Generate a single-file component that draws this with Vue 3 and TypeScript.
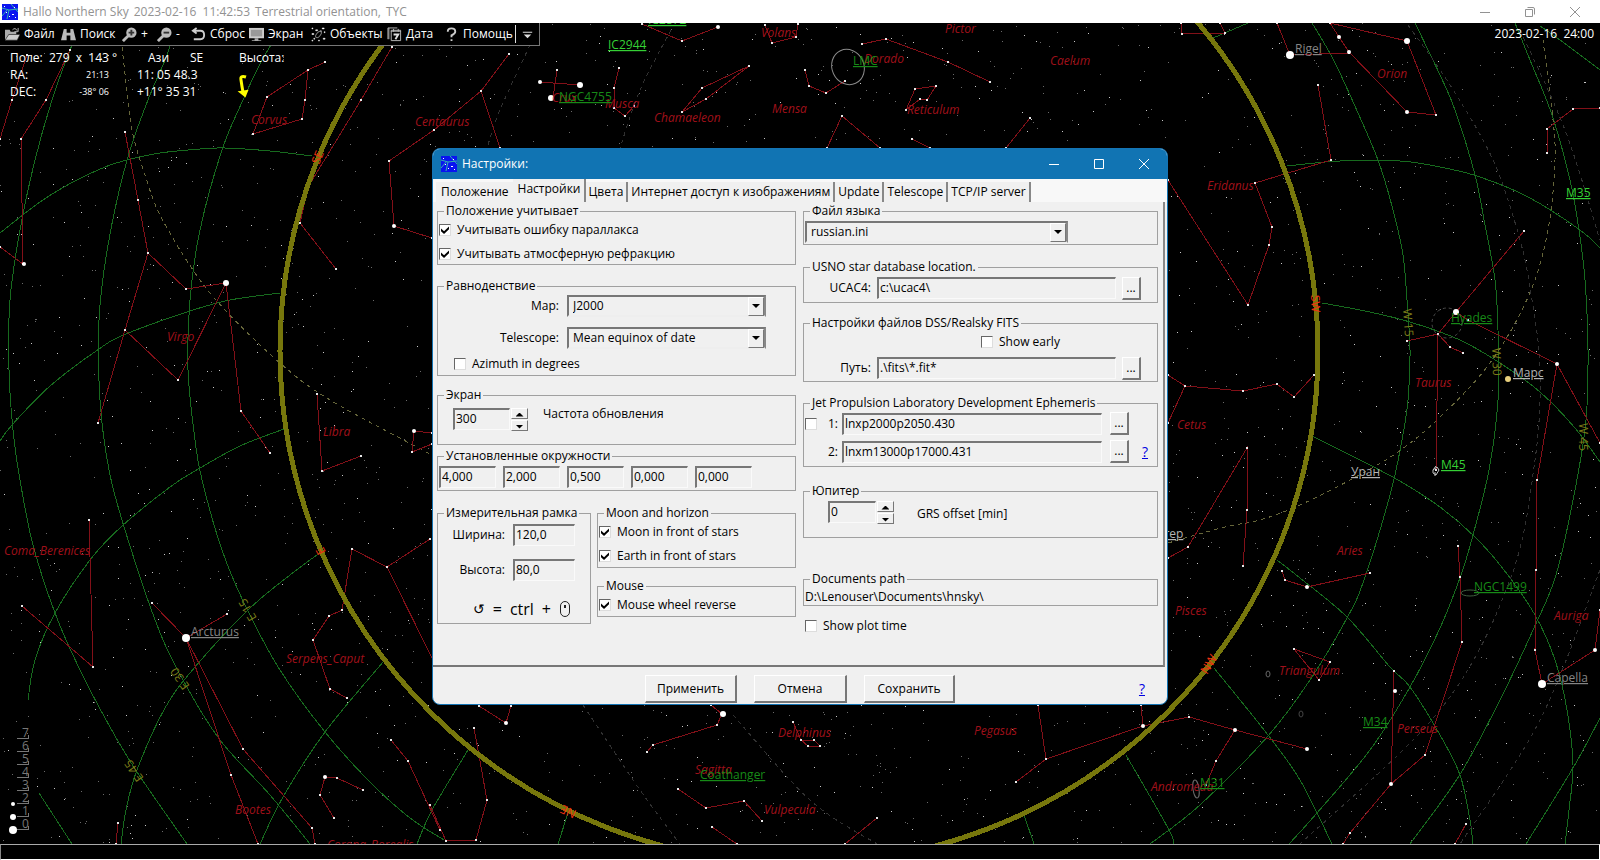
<script setup lang="ts">
import { ref } from 'vue'

type Point = [number, number]

interface Label {
  x: number
  y: number
  text: string
}

const parse = (source: string): Point[] =>
  source.split(' ').map((pair) => pair.split(',').map(Number) as Point)

/* Catmull-Rom spline through the given points */
function smooth(source: string): string {
  const p = parse(source)
  let d = `M${p[0][0]} ${p[0][1]}`
  for (let i = 0; i < p.length - 1; i++) {
    const a = p[Math.max(i - 1, 0)]
    const b = p[i]
    const c = p[i + 1]
    const e = p[Math.min(i + 2, p.length - 1)]
    d += `C${b[0] + (c[0] - a[0]) / 6} ${b[1] + (c[1] - a[1]) / 6} ${c[0] - (e[0] - b[0]) / 6} ${c[1] - (e[1] - b[1]) / 6} ${c[0]} ${c[1]}`
  }
  return d
}

const gridLines = [
  '0,233 40,202 73,182 105,167 127,160 160,153 200,149 225,148 270,151 312,156',
  '0,441 12,425 50,386 99,349 126,334 190,311 230,300 280,293',
  '284,429 240,446 200,468 170,487 122,526 90,560 55,613 35,660 28,700',
  '321,552 290,575 248,610 195,667 165,708 137,770 126,810 121,844',
  '383,662 325,732 283,797 260,844',
  '82,23 70,50 52,100 35,160 20,230 10,300 9,370 13,430 20,480 33,545 55,613 80,670 110,727 137,772 187,844',
  '178,23 165,60 148,100 127,160 108,245 99,320 100,400 109,470 125,530 157,625 183,680 220,740 270,795 310,844',
  '285,23 262,60 243,100 222,150 200,230 190,300 188,370 195,440 202,480 222,550 245,605 280,670 325,732 370,782 410,818 444,840',
  '39,793 72,844',
  '468,750 432,810 417,844',
  '568,813 558,844',
  '1024,815 1034,844',
  '1126,755 1168,828 1174,844',
  '1213,38 1248,23',
  '1312,23 1332,57 1350,95 1378,160 1393,210 1403,255 1407,300 1410,350 1408,400 1402,440 1390,495 1364,580 1347,618 1310,680 1268,736 1200,805 1150,844',
  '1415,23 1440,75 1455,110 1475,175 1485,225 1495,280 1498,330 1498,400 1489,470 1473,535 1461,575 1440,628 1410,687 1370,750 1317,813 1289,844',
  '1515,23 1530,60 1552,115 1570,180 1579,230 1585,280 1588,350 1586,420 1575,490 1556,575 1533,630 1500,700 1459,776 1410,844',
  '1540,26 1560,40 1600,70',
  '1600,718 1573,768 1526,844',
  '1287,166 1340,161 1400,161 1440,167 1480,177 1530,198 1580,230 1600,248',
  '1322,303 1365,311 1410,322 1460,340 1500,363 1540,392 1575,428 1600,462',
  '1312,436 1350,455 1398,480 1440,507 1475,537 1504,570 1535,615 1555,660 1567,710 1573,765 1569,810 1565,844',
  '1277,560 1300,578 1347,617 1390,667 1410,687 1440,735 1460,775 1470,820 1473,844',
  '1214,668 1268,735 1300,780 1332,844',
].map(smooth)

const ecliptic = [
  '122,47 128,100 133,135 145,175 160,215 193,270 225,310 280,363 330,400 432,455',
  '1168,543 1225,527 1260,520 1300,505 1350,480 1398,452 1440,417 1490,363 1529,295 1548,230 1555,160 1552,110 1543,40',
].map(smooth)

const boundaries = [
  '1408,25 1450,85 1493,160 1520,240 1532,300 1540,370 1535,460 1510,580 1440,710 1300,844',
  '1520,30 1565,130 1600,240',
  '1600,570 1540,720 1460,844',
  '530,45 500,110 487,148',
  '671,30 640,90 620,148',
  '583,705 640,790 680,844',
  '733,715 810,800 877,844',
].map(smooth)

const figures = [
  '27,55 12,100 0,139',
  '70,50 46,100 21,139 23,264 0,247',
  '125,132 138,200 148,253 186,289 226,283 241,411 270,453',
  '226,283 178,380 125,330',
  '148,253 125,330 98,423',
  '253,134 267,97 308,70 325,62',
  '308,70 305,100 302,119 253,134',
  '392,47 361,100 308,187 300,223 336,269',
  '509,54 481,91 434,130 389,161 394,226 432,238',
  '481,91 500,148',
  '317,394 322,471 361,456',
  '432,433 414,431 412,452 432,444',
  '89,520 93,667 22,606',
  '152,603 186,638 227,614',
  '186,638 243,749 312,828 315,844',
  '186,638 231,775 258,844',
  '430,539 387,567 352,549 342,610 329,616 313,640 330,689 347,698',
  '387,567 434,662',
  '391,740 408,761 440,830',
  '363,790 337,778 325,777 320,795 334,818',
  '118,823 116,844',
  '642,24 682,41 718,27',
  '557,70 553,98',
  '540,82 580,85',
  '619,68 614,88 614,108 625,116 634,106',
  '749,66 702,88 682,112 706,99 749,66',
  '765,25 772,43 796,37 798,24',
  '862,44 886,39 948,62 990,82',
  '805,70 809,86 826,93 845,81',
  '915,89 936,86 927,100 920,99 906,110 915,89',
  '827,148 842,116 880,148',
  '1006,148 1030,118',
  '912,139 930,148',
  '1181,23 1182,34 1225,33 1220,23',
  '1277,23 1290,55 1349,53',
  '1330,23 1407,41 1436,115 1407,112 1349,52 1339,37 1330,23',
  '1318,85 1331,160 1255,183 1272,227 1269,245 1248,305 1168,180',
  '1547,153 1547,129 1573,109 1600,108',
  '1524,231 1456,312 1438,334 1407,341',
  '1438,334 1450,347 1463,353',
  '1438,334 1436,470',
  '1456,312 1468,320 1557,364 1600,443',
  '1557,364 1537,480 1536,570 1535,650 1542,684 1595,650 1600,610',
  '1168,375 1185,386 1243,391 1277,384 1294,397 1314,375',
  '1185,386 1168,423',
  '1168,558 1188,547 1247,448 1247,510 1243,566',
  '1282,571 1285,580 1307,587 1370,573',
  '1458,546 1460,577 1462,642 1425,755 1391,784 1350,833 1343,844',
  '1391,784 1394,671',
  '1294,649 1330,662 1319,680 1294,649',
  '1143,726 1189,717 1235,730 1307,749',
  '1235,730 1216,761 1206,785',
  '1466,824 1455,844',
  '465,706 483,723 487,706',
  '474,728 487,800 476,840 446,841 430,805',
  '711,705 722,714 717,725 653,745 647,752',
  '793,722 801,740 814,740 820,746 808,746 801,740',
  '678,789 706,808 744,801 762,821',
  '712,827 737,844',
  '845,844 877,818',
  '1038,705 1046,759 1143,726 1141,705',
  '1046,759 1016,782',
].map((f) => (f.startsWith('465,706') ? '479,706 506,723 511,706' : f))

const brightStars = [
  [186, 638, 4], [1290, 55, 4], [1542, 684, 4], [226, 283, 3], [1407, 41, 3], [1456, 312, 3],
  [24, 264, 2], [394, 226, 2], [414, 431, 2], [325, 777, 2], [540, 82, 2], [580, 85, 3],
  [551, 98, 3], [718, 27, 2], [1339, 37, 2], [1349, 52, 2], [1407, 112, 2], [1557, 364, 2],
  [1307, 587, 2], [1235, 730, 2], [1307, 749, 2], [1395, 691, 2], [1391, 784, 2], [1595, 650, 2],
  [723, 714, 3], [506, 723, 2], [1143, 726, 2], [13, 830, 4], [13, 817, 3], [13, 804, 2],
]

/* Faint background stars: a seeded generator keeps the field stable */
function starField(count: number, seed: number): string {
  let state = seed
  const next = () => {
    state = (state * 1664525 + 1013904223) % 4294967296
    return state / 4294967296
  }
  let d = ''
  for (let i = 0; i < count; i++) d += `M${Math.floor(next() * 1600)} ${23 + Math.floor(next() * 820)}h1v1h-1z`
  return d
}
const dimStars = starField(2200, 77)
const faintStars = starField(750, 1203)
const vertexStars = figures
  .flatMap(parse)
  .map(([x, y]) => `M${x - 1} ${y - 1}h2v2h-2z`)
  .join('')

const constellations: Label[] = [
  { x: 251, y: 124, text: 'Corvus' },
  { x: 415, y: 126, text: 'Centaurus' },
  { x: 167, y: 341, text: 'Virgo' },
  { x: 323, y: 436, text: 'Libra' },
  { x: 4, y: 555, text: 'Coma_Berenices' },
  { x: 286, y: 663, text: 'Serpens_Caput' },
  { x: 235, y: 814, text: 'Bootes' },
  { x: 327, y: 849, text: 'Corona_Borealis' },
  { x: 552, y: 102, text: 'Crux' },
  { x: 605, y: 108, text: 'Musca' },
  { x: 654, y: 122, text: 'Chamaeleon' },
  { x: 761, y: 37, text: 'Volans' },
  { x: 772, y: 113, text: 'Mensa' },
  { x: 864, y: 63, text: 'Dorado' },
  { x: 907, y: 114, text: 'Reticulum' },
  { x: 945, y: 33, text: 'Pictor' },
  { x: 1050, y: 65, text: 'Caelum' },
  { x: 1377, y: 78, text: 'Orion' },
  { x: 1207, y: 190, text: 'Eridanus' },
  { x: 1415, y: 387, text: 'Taurus' },
  { x: 1177, y: 429, text: 'Cetus' },
  { x: 1337, y: 555, text: 'Aries' },
  { x: 1175, y: 615, text: 'Pisces' },
  { x: 1279, y: 675, text: 'Triangulum' },
  { x: 1554, y: 620, text: 'Auriga' },
  { x: 1397, y: 733, text: 'Perseus' },
  { x: 1151, y: 791, text: 'Andromeda' },
  { x: 778, y: 737, text: 'Delphinus' },
  { x: 974, y: 735, text: 'Pegasus' },
  { x: 695, y: 774, text: 'Sagitta' },
  { x: 764, y: 814, text: 'Vulpecula' },
]

const deepSky: (Label & { bright?: boolean })[] = [
  { x: 648, y: 24, text: 'IC2872', bright: true },
  { x: 608, y: 49, text: 'IC2944', bright: true },
  { x: 559, y: 101, text: 'NGC4755' },
  { x: 853, y: 65, text: 'LMC' },
  { x: 1566, y: 197, text: 'M35', bright: true },
  { x: 1451, y: 322, text: 'Hyades' },
  { x: 1441, y: 469, text: 'M45', bright: true },
  { x: 1474, y: 591, text: 'NGC1499' },
  { x: 1363, y: 726, text: 'M34' },
  { x: 1200, y: 787, text: 'M31' },
  { x: 700, y: 779, text: 'Coathanger' },
]

const starNames: Label[] = [
  { x: 191, y: 636, text: 'Arcturus' },
  { x: 1295, y: 53, text: 'Rigel' },
  { x: 1547, y: 682, text: 'Capella' },
]

const planets: Label[] = [
  { x: 1513, y: 377, text: 'Марс' },
  { x: 1351, y: 476, text: 'Уран' },
  { x: 1136, y: 538, text: 'Юпитер' },
]

const degreeMarks = [
  { x: 257, y: 618, angle: -120, text: 'E 15' },
  { x: 190, y: 686, angle: -125, text: 'E 30' },
  { x: 144, y: 778, angle: -125, text: 'E 45' },
  { x: 1403, y: 309, angle: 86, text: 'W 15' },
  { x: 1492, y: 348, angle: 88, text: 'W 30' },
  { x: 1579, y: 423, angle: 90, text: 'W 45' },
]

const horizonMarks = [
  { x: 319, y: 165, angle: -68, text: 'SE' },
  { x: 326, y: 552, angle: -118, text: 'E' },
  { x: 577, y: 811, angle: 205, text: 'NE' },
  { x: 1311, y: 295, angle: 88, text: 'SW' },
  { x: 1207, y: 675, angle: -58, text: 'NW' },
]

const magnitudes = [7, 6, 5, 4, 3, 2, 1, 0]

const tools = [
  { icon: 'open', text: 'Файл' },
  { icon: 'find', text: 'Поиск' },
  { icon: 'zoomin', text: '+' },
  { icon: 'zoomout', text: '-' },
  { icon: 'undo', text: 'Сброс' },
  { icon: 'screen', text: 'Экран' },
  { icon: 'objects', text: 'Объекты' },
  { icon: 'date', text: 'Дата' },
  { icon: 'help', text: 'Помощь' },
]

const tabs = ['Положение', 'Настройки', 'Цвета', 'Интернет доступ к изображениям', 'Update', 'Telescope', 'TCP/IP server']
const activeTab = ref(1)

const parallax = ref(true)
const refraction = ref(true)
const azimuth = ref(false)
const moonFront = ref(true)
const earthFront = ref(true)
const wheelReverse = ref(true)
const showEarly = ref(false)
const useEphemeris = ref(false)
const plotTime = ref(false)
const refresh = ref(300)
const grs = ref(0)
const circles = ref(['4,000', '2,000', '0,500', '0,000', '0,000'])
const frameWidth = ref('120,0')
const frameHeight = ref('80,0')
const ucacPath = ref('c:\\ucac4\\')
const fitsPath = ref('.\\fits\\*.fit*')
const ephemeris1 = ref('lnxp2000p2050.430')
const ephemeris2 = ref('lnxm13000p17000.431')
</script>

<template>
  <div class="desktop">
    <header class="titlebar">
      <svg class="logo" viewBox="0 0 16 16" aria-hidden="true">
        <rect width="16" height="16" fill="#0a14f0" />
        <path d="M0 4L7 6L16 5M7 6L5 15M9 0L16 8M0 12L6 5" fill="none" stroke="#35b0b0" />
        <path d="M2 2h1v1h-1zM12 3h1v1h-1zM4 8h1v1h-1zM10 10h2v1h-2zM13 13h1v1h-1zM7 12h1v1h-1z" fill="#fff" />
      </svg>
      <h1>
        <span>Hallo Northern Sky</span><span>2023-02-16&nbsp; 11:42:53</span><span>Terrestrial orientation,</span><span>TYC</span>
      </h1>
      <div class="wincontrols">
        <button type="button" aria-label="Minimize"><svg viewBox="0 0 12 12"><path d="M1 6.500H11" /></svg></button>
        <button type="button" aria-label="Restore"><svg viewBox="0 0 12 12"><path d="M3.500 1.500H9Q10.500 1.500 10.500 3V8.500M1.500 3.500H8.500V10.500H1.500Z" /></svg></button>
        <button type="button" aria-label="Close"><svg viewBox="0 0 12 12"><path d="M1 1L11 11M11 1L1 11" /></svg></button>
      </div>
    </header>

    <main class="viewport">
      <svg class="sky" viewBox="0 23 1600 821" preserveAspectRatio="xMidYMin slice">
        <g shape-rendering="crispEdges" fill="none">
          <path :d="dimStars" fill="#6a6a6a" />
          <path :d="faintStars" fill="#c8c8c8" />
          <path v-for="(d, i) in gridLines" :key="'g' + i" :d="d" stroke="#176a1e" />
          <path v-for="(d, i) in ecliptic" :key="'e' + i" :d="d" stroke="#66663a" stroke-dasharray="4 4" />
          <path v-for="(d, i) in boundaries" :key="'b' + i" :d="d" stroke="#303030" stroke-dasharray="4 4" />
          <polyline v-for="(f, i) in figures" :key="'f' + i" :points="f" stroke="#821018" />
          <path :d="vertexStars" fill="#e8e8e8" />
          <ellipse cx="799" cy="351" rx="519" ry="513" stroke="#77770c" stroke-width="5" />
        </g>
        <g fill="none" stroke="#8a8a8a">
          <ellipse cx="848" cy="67" rx="16" ry="18" transform="rotate(-25 848 67)" />
          <ellipse cx="1470" cy="593" rx="9" ry="3" stroke="#3f5f3f" />
          <ellipse cx="1196" cy="789" rx="3" ry="9" transform="rotate(-8 1196 789)" stroke="#666" />
          <ellipse cx="1268" cy="674" rx="2" ry="3" stroke="#666" />
          <ellipse cx="1301" cy="714" rx="2" ry="3" stroke="#444" />
          <circle cx="1447" cy="323" r="15" stroke="#4c4c4c" stroke-dasharray="3 3" />
          <path d="M1433 470l4-3 2 3-3 5-3-2zl3-4M1435 476v-4" stroke="#c8c8c8" />
        </g>
        <circle v-for="(s, i) in brightStars" :key="'s' + i" :cx="s[0]" :cy="s[1]" :r="s[2]" fill="#fff" />
        <circle cx="1508" cy="379" r="3" fill="#e8cf7c" />
        <g class="name constellation">
          <text v-for="l in constellations" :key="l.text" :x="l.x" :y="l.y">{{ l.text }}</text>
        </g>
        <g class="name linked">
          <text v-for="l in deepSky" :key="l.text" :x="l.x" :y="l.y" :class="{ bright: l.bright }">{{ l.text }}</text>
          <text v-for="l in starNames" :key="l.text" :x="l.x" :y="l.y" class="star">{{ l.text }}</text>
          <text v-for="l in planets" :key="l.text" :x="l.x" :y="l.y" class="planet">{{ l.text }}</text>
        </g>
        <g class="name degree">
          <text v-for="m in degreeMarks" :key="m.text" :transform="`translate(${m.x} ${m.y}) rotate(${m.angle})`">{{ m.text }}</text>
        </g>
        <g class="name horizon">
          <text v-for="m in horizonMarks" :key="m.text" :transform="`translate(${m.x} ${m.y}) rotate(${m.angle})`">{{ m.text }}</text>
        </g>
        <g class="name scale">
          <g v-for="(m, i) in magnitudes" :key="m">
            <text x="22" :y="737 + i * 13">{{ m }}</text>
            <path :d="`M17 ${738.5 + i * 13}H29M28.500 ${735 + i * 13}V${738 + i * 13}`" stroke="#777" />
          </g>
        </g>
        <path d="M246 77Q240 75 241 80Q242 87 243 92" fill="none" stroke="#ff0" stroke-width="3" />
        <path d="M240 92l7-1-2 5z" fill="#ff0" stroke="#ff0" stroke-width="2" />
      </svg>

      <nav class="toolbar" aria-label="Menu">
        <button v-for="t in tools" :key="t.icon" type="button">
          <svg viewBox="0 0 16 16" aria-hidden="true">
            <template v-if="t.icon === 'open'">
              <path d="M0 14V3h5l1 2h6v3H4z" fill="#aaa" />
              <path d="M4 8h12l-3 6H0z" fill="#ccc" stroke="#222" stroke-width=".6" />
              <path d="M8 3q3-3 5 1M14 1v4h-4" fill="none" stroke="#bbb" />
            </template>
            <path v-else-if="t.icon === 'find'" d="M3 2h3v4h4V2h3l3 12h-6V9H6v5H0z" fill="#bbb" />
            <template v-else-if="t.icon === 'zoomin' || t.icon === 'zoomout'">
              <path d="M1 15L7 9" stroke="#bbb" stroke-width="3" />
              <circle cx="10" cy="6" r="5.500" fill="#bbb" />
              <path :d="t.icon === 'zoomin' ? 'M10 3V9M7 6H13' : 'M7 6H13'" stroke="#333" stroke-width="2" />
            </template>
            <path v-else-if="t.icon === 'undo'" d="M6 1L2 4L6 7M2 4H10Q14 4 14 8.500T10 13H3" fill="none" stroke="#ccc" stroke-width="2" />
            <template v-else-if="t.icon === 'screen'">
              <rect y="1" width="16" height="11" fill="#ccc" />
              <rect x="2" y="3" width="12" height="7" fill="#999" />
              <path d="M6 12h4v2h3v1H3v-1h3z" fill="#aaa" />
            </template>
            <template v-else-if="t.icon === 'objects'">
              <path d="M1 1h1v1h-1zM5 3h2v1h-2zM12 1h2v1h-2zM14 5h1v1h-1zM1 7h2v1h-2zM3 12h1v1h-1zM8 14h1v1h-1zM13 12h2v1h-2zM10 4h1v1h-1zM1 14h1v1h-1z" fill="#fff" stroke="#fff" stroke-width=".5" />
              <ellipse cx="8" cy="8" rx="2" ry="4" transform="rotate(40 8 8)" fill="none" stroke="#888" />
            </template>
            <template v-else-if="t.icon === 'date'">
              <path d="M1 13V1h10M2 1v12M4.500 3.500h10v11h-10zM4 4.500h11M7 2v3M12 2v3" fill="none" stroke="#bbb" />
              <path d="M7 8h5L9 13" fill="none" stroke="#ddd" stroke-width="2" />
            </template>
            <path v-else d="M4 5Q4 1.500 8 1.500T12 5Q12 7 8 9V11M8 13v2" fill="none" stroke="#ccc" stroke-width="2" />
          </svg>
          <span>{{ t.text }}</span>
        </button>
        <button type="button" class="more" aria-label="More">
          <svg viewBox="0 0 16 16"><path d="M3 5h10v1H3zM4 8h8l-4 4z" fill="#ddd" /></svg>
        </button>
      </nav>

      <p class="clock">2023-02-16&nbsp; 24:00</p>

      <section class="readout" aria-label="Position">
        <span>Поле:</span><span>279&nbsp; x&nbsp; 143 °</span><span class="azi">Ази</span><span>SE</span><span>Высота:</span>
        <span>RA:</span><small>21:13</small><span class="wide">11: 05 48.3</span><span></span>
        <span>DEC:</span><small>-38° 06</small><span class="wide">+11° 35 31</span>
      </section>

      <section class="dialog" role="dialog" aria-labelledby="dlg-title">
        <header class="caption">
          <svg class="logo" viewBox="0 0 16 16" aria-hidden="true">
            <rect width="16" height="16" fill="#0a14f0" />
            <path d="M0 4L7 6L16 5M7 6L5 15M9 0L16 8M0 12L6 5" fill="none" stroke="#35b0b0" />
            <path d="M2 2h1v1h-1zM12 3h1v1h-1zM4 8h1v1h-1zM10 10h2v1h-2zM13 13h1v1h-1zM7 12h1v1h-1z" fill="#fff" />
          </svg>
          <h2 id="dlg-title">Настройки:</h2>
          <div class="wincontrols">
            <button type="button" aria-label="Minimize"><svg viewBox="0 0 12 12"><path d="M1 6.500H11" /></svg></button>
            <button type="button" aria-label="Maximize"><svg viewBox="0 0 12 12"><path d="M1.500 1.500H10.500V10.500H1.500Z" /></svg></button>
            <button type="button" aria-label="Close"><svg viewBox="0 0 12 12"><path d="M1 1L11 11M11 1L1 11" /></svg></button>
          </div>
        </header>

        <div class="tabs" role="tablist">
          <button
            v-for="(t, i) in tabs"
            :key="t"
            type="button"
            role="tab"
            :aria-selected="i === activeTab"
            :class="{ active: i === activeTab }"
            @click="activeTab = i"
          >{{ t }}</button>
        </div>

        <div class="page">
          <div class="column">
            <fieldset class="g-position">
              <legend>Положение учитывает</legend>
              <label class="check"><input v-model="parallax" type="checkbox" />Учитывать ошибку параллакса</label>
              <label class="check"><input v-model="refraction" type="checkbox" />Учитывать атмосферную рефракцию</label>
            </fieldset>

            <fieldset class="g-equinox">
              <legend>Равноденствие</legend>
              <div class="pairs">
                <label for="map">Map:</label>
                <div class="combo"><select id="map"><option>J2000</option></select><i class="arrow" aria-hidden="true"></i></div>
                <label for="scope">Telescope:</label>
                <div class="combo"><select id="scope"><option>Mean equinox of date</option></select><i class="arrow" aria-hidden="true"></i></div>
              </div>
              <label class="check"><input v-model="azimuth" type="checkbox" />Azimuth in degrees</label>
            </fieldset>

            <fieldset class="g-screen">
              <legend>Экран</legend>
              <div class="spinrow">
                <input id="refresh" v-model.number="refresh" type="text" />
                <div class="spin">
                  <button type="button" aria-label="Increase" @click="refresh++"></button>
                  <button type="button" aria-label="Decrease" class="down" @click="refresh--"></button>
                </div>
                <label for="refresh">Частота обновления</label>
              </div>
            </fieldset>

            <fieldset class="g-circles">
              <legend>Установленные окружности</legend>
              <div class="circles">
                <input v-for="(c, i) in circles" :key="i" v-model="circles[i]" type="text" :aria-label="`Окружность ${i + 1}`" />
              </div>
            </fieldset>

            <div class="split">
              <fieldset class="g-frame">
                <legend>Измерительная рамка</legend>
                <div class="size"><label for="fw">Ширина:</label><input id="fw" v-model="frameWidth" type="text" /></div>
                <div class="size"><label for="fh">Высота:</label><input id="fh" v-model="frameHeight" type="text" /></div>
                <p class="hint">
                  <span class="turn">↺</span><span>=</span><span>ctrl</span><span>+</span>
                  <svg viewBox="0 0 12 18" aria-hidden="true"><rect x="1.500" y="1.500" width="9" height="15" rx="4.500" fill="none" stroke="#222" /><path d="M6 5v3" stroke="#222" stroke-width="2" /></svg>
                </p>
              </fieldset>
              <div class="side">
                <fieldset class="g-moon">
                  <legend>Moon and horizon</legend>
                  <label class="check"><input v-model="moonFront" type="checkbox" />Moon in front of stars</label>
                  <label class="check"><input v-model="earthFront" type="checkbox" />Earth in front of stars</label>
                </fieldset>
                <fieldset class="g-mouse">
                  <legend>Mouse</legend>
                  <label class="check"><input v-model="wheelReverse" type="checkbox" />Mouse wheel reverse</label>
                </fieldset>
              </div>
            </div>
          </div>

          <div class="column">
            <fieldset class="g-lang">
              <legend>Файл языка</legend>
              <div class="combo"><select aria-label="Файл языка"><option>russian.ini</option></select><i class="arrow" aria-hidden="true"></i></div>
            </fieldset>

            <fieldset class="g-usno">
              <legend>USNO star database location.</legend>
              <div class="path"><label for="ucac">UCAC4:</label><input id="ucac" v-model="ucacPath" type="text" /><button type="button" class="raised">...</button></div>
            </fieldset>

            <fieldset class="g-fits">
              <legend>Настройки файлов DSS/Realsky FITS</legend>
              <label class="check"><input v-model="showEarly" type="checkbox" />Show early</label>
              <div class="path"><label for="fits">Путь:</label><input id="fits" v-model="fitsPath" type="text" /><button type="button" class="raised">...</button></div>
            </fieldset>

            <fieldset class="g-jpl">
              <legend>Jet Propulsion Laboratory Development Ephemeris</legend>
              <div class="eph"><input v-model="useEphemeris" type="checkbox" aria-label="Ephemeris" /><label for="e1">1:</label><input id="e1" v-model="ephemeris1" type="text" /><button type="button" class="raised">...</button></div>
              <div class="eph"><span></span><label for="e2">2:</label><input id="e2" v-model="ephemeris2" type="text" /><button type="button" class="raised">...</button><a href="#">?</a></div>
            </fieldset>

            <fieldset class="g-jupiter">
              <legend>Юпитер</legend>
              <div class="spinrow">
                <input id="grs" v-model.number="grs" type="text" />
                <div class="spin">
                  <button type="button" aria-label="Increase" @click="grs++"></button>
                  <button type="button" aria-label="Decrease" class="down" @click="grs--"></button>
                </div>
                <label for="grs">GRS offset [min]</label>
              </div>
            </fieldset>

            <fieldset class="g-docs">
              <legend>Documents path</legend>
              <p>D:\Lenouser\Documents\hnsky\</p>
            </fieldset>

            <label class="check plot"><input v-model="plotTime" type="checkbox" />Show plot time</label>
          </div>
        </div>

        <footer class="actions">
          <button type="button" class="raised">Применить</button>
          <button type="button" class="raised">Отмена</button>
          <button type="button" class="raised">Сохранить</button>
          <a href="#">?</a>
        </footer>
      </section>
    </main>

    <footer class="status"></footer>
  </div>
</template>

<style>
body {
  margin: 0;
  background: #000;
}
</style>

<style scoped>
.desktop,
.desktop * {
  box-sizing: border-box;
}
.desktop {
  display: flex;
  flex-direction: column;
  height: 100vh;
  overflow: hidden;
  color: #000;
  font: 12px/16px 'Open Sans', 'Noto Sans', sans-serif;
}
button,
input,
select {
  margin: 0;
  padding: 0;
  border: 0;
  border-radius: 0;
  background: none;
  color: inherit;
  font: inherit;
}
h1,
h2,
p {
  margin: 0;
  font-size: 12px;
  font-weight: 400;
}
a {
  color: #0000e0;
  font-size: 14px;
}

.titlebar {
  display: flex;
  align-items: center;
  height: 23px;
  flex: none;
  background: #fff;
  color: #929292;
}
.logo {
  width: 16px;
  height: 16px;
  flex: none;
}
.titlebar .logo {
  margin: 0 5px 0 2px;
}
.titlebar h1 {
  display: flex;
  gap: 5px;
  white-space: nowrap;
}
.wincontrols {
  display: flex;
  margin-left: auto;
}
.wincontrols button {
  display: grid;
  place-items: center;
  width: 45px;
  height: 20px;
}
.wincontrols svg {
  width: 12px;
  height: 12px;
  fill: none;
  stroke: currentColor;
}
.titlebar .wincontrols {
  margin-right: 3px;
}

.viewport {
  position: relative;
  flex: 1;
  min-height: 0;
  overflow: hidden;
  background: #000;
  color: #fff;
}
.sky {
  position: absolute;
  inset: 0;
  width: 100%;
  height: 100%;
}
.name {
  font-size: 12px;
}
.constellation {
  fill: #a0101a;
  font-style: italic;
}
.linked text {
  fill: #178a17;
  text-decoration: underline;
}
.linked .bright {
  fill: #35d035;
}
.linked .star {
  fill: #858585;
}
.linked .planet {
  fill: #b4b4b4;
}
.degree {
  fill: #7c7c18;
}
.horizon {
  fill: #f03010;
}
.scale {
  fill: #777;
}

.toolbar {
  position: relative;
  display: grid;
  grid-template-columns: 56px 61px 35px 34px 58px 62px 76px 57px 71px 24px;
  width: max-content;
  height: 23px;
  padding-left: 5px;
  border-right: 1px solid #777;
  border-bottom: 1px solid #777;
  background: #000;
}
.toolbar button {
  display: flex;
  align-items: center;
  gap: 4px;
  white-space: nowrap;
}
.toolbar svg {
  width: 15px;
  height: 15px;
  flex: none;
}
.toolbar .more {
  justify-content: center;
  margin: 2px 0;
  border-left: 1px solid #ddd;
}
.clock {
  position: absolute;
  top: 3px;
  right: 6px;
}
.readout {
  position: relative;
  display: grid;
  grid-template-columns: 39px 88px 53px 49px 60px;
  grid-auto-rows: 17px;
  align-items: center;
  width: max-content;
  padding: 3px 0 0 10px;
  white-space: nowrap;
}
.readout .azi {
  padding-left: 11px;
}
.readout small {
  padding-right: 28px;
  text-align: right;
  font-size: 9px;
}
.readout .wide {
  grid-column: span 2;
}

.dialog {
  position: absolute;
  top: 125px;
  left: 50%;
  width: 736px;
  max-width: 100%;
  transform: translateX(-50%);
  overflow: hidden;
  border: 1px solid #1474b4;
  border-radius: 8px;
  background: #f0f0f0;
  color: #000;
}
.caption {
  display: flex;
  align-items: center;
  height: 30px;
  padding: 0 1px 0 8px;
  background: #1174b3;
  color: #fff;
}
.caption h2 {
  margin-left: 5px;
}
.tabs {
  display: flex;
  align-items: flex-end;
  height: 23px;
  padding-left: 3px;
  background: #f8f8f8;
}
.tabs button {
  flex: none;
  height: 20px;
  padding: 0 3px;
  border-right: 2px solid #888;
  background: #f0f0f0;
  white-space: nowrap;
}
.tabs button:first-child {
  padding: 0 4px 0 5px;
  border-right: 0;
}
.tabs .active {
  height: 23px;
  padding: 0 3px 3px 5px;
}
.page {
  display: grid;
  grid-template-columns: 360fr 356fr;
  gap: 7px;
  margin-right: 2px;
  padding: 1px 5px 29px 4px;
  border-right: 2px solid #888;
  border-bottom: 2px solid #777;
}
.column {
  display: flex;
  flex-direction: column;
  min-width: 0;
}
fieldset {
  min-width: 0;
  margin: 0;
  padding: 1px 1px 0;
  border: 1px solid #a0a0a0;
}
legend {
  margin-left: 5px;
  padding: 0 2px;
  line-height: 16px;
}
.check {
  display: flex;
  align-items: center;
  gap: 6px;
  height: 20px;
  white-space: nowrap;
}
.check + .check {
  margin-top: 4px;
}
input[type='checkbox'] {
  position: relative;
  width: 12px;
  height: 12px;
  flex: none;
  appearance: none;
  border: 1px solid;
  border-color: #666 #ddd #ddd #666;
  background: #fff;
}
input[type='checkbox']:checked::before {
  position: absolute;
  inset: 1px;
  background: #000;
  clip-path: polygon(0 30%, 38% 65%, 100% 5%, 100% 40%, 38% 100%, 0 65%);
  content: '';
}
input[type='text'] {
  width: 100%;
  min-width: 0;
  height: 22px;
  padding: 0 1px 2px;
  border: 1px solid;
  border-width: 2px 1px 1px 2px;
  border-color: #777 #fafafa #fafafa #777;
  background: #f0f0f0;
}
.combo {
  position: relative;
}
select {
  display: block;
  width: 100%;
  height: 22px;
  padding: 0 20px 0 4px;
  appearance: none;
  border: 2px solid;
  border-color: #777 #888 #eee #777;
  background: #f0f0f0;
}
.arrow {
  position: absolute;
  top: 2px;
  right: 2px;
  bottom: 1px;
  width: 16px;
  border: 1px solid;
  border-color: #fff #777 #777 #fff;
  pointer-events: none;
}
.arrow::before,
.spin button::before {
  display: block;
  width: 8px;
  height: 4px;
  margin: 6px auto 0;
  background: #000;
  clip-path: polygon(0 0, 100% 0, 50% 100%);
  content: '';
}
.raised {
  border: 1px solid;
  border-width: 1px 2px 2px 1px;
  border-color: #fff #777 #777 #fff;
  background: #f0f0f0;
}
.pairs {
  display: grid;
  grid-template-columns: 120px 199px;
  gap: 10px 8px;
  align-items: center;
}
.pairs label {
  text-align: right;
}
.spinrow {
  display: flex;
  gap: 1px;
}
.spin {
  display: flex;
  flex-direction: column;
  gap: 1px;
  width: 17px;
  flex: none;
}
.spin button {
  height: 11px;
  border: 1px solid;
  border-color: #fff #777 #777 #fff;
}
.spin button::before {
  margin-top: 2px;
  clip-path: polygon(50% 0, 100% 100%, 0 100%);
}
.spin .down::before {
  clip-path: polygon(0 0, 100% 0, 50% 100%);
}

.g-position {
  min-height: 62px;
}
.g-equinox {
  min-height: 98px;
  margin-top: 13px;
}
.g-equinox .check {
  margin: 5px 0 0 15px;
}
.g-screen {
  min-height: 58px;
  margin-top: 11px;
}
.g-screen .spinrow {
  padding: 4px 0 0 14px;
}
.g-screen input {
  width: 57px;
}
.g-screen label {
  padding-left: 14px;
  line-height: 12px;
}
.g-circles {
  min-height: 43px;
  margin-top: 3px;
}
.g-circles .circles {
  padding-top: 1px;
}
.circles {
  display: grid;
  grid-template-columns: repeat(5, 57px);
  gap: 7px;
}
.split {
  display: grid;
  grid-template-columns: 154px 1fr;
  gap: 6px;
  margin-top: 14px;
}
.g-frame {
  min-height: 119px;
}
.size {
  display: grid;
  grid-template-columns: 66px 62px;
  gap: 8px;
  align-items: center;
  margin-top: 2px;
  text-align: right;
}
.size + .size {
  margin-top: 13px;
}
.hint {
  display: flex;
  align-items: center;
  justify-content: flex-end;
  gap: 8px;
  margin-top: 17px;
  padding-right: 18px;
  font-size: 16px;
  line-height: 22px;
}
.hint .turn {
  font-size: 14px;
}
.hint svg {
  width: 12px;
  height: 18px;
}
.g-moon {
  min-height: 63px;
}
.g-mouse {
  min-height: 39px;
  margin-top: 10px;
}

.g-lang {
  min-height: 42px;
}
.g-lang .combo {
  width: 263px;
  padding-top: 1px;
}
.g-lang .arrow {
  top: 3px;
}
.g-usno {
  min-height: 44px;
  margin-top: 14px;
}
.path {
  display: grid;
  grid-template-columns: 66px 1fr 19px;
  column-gap: 6px;
  align-items: start;
  padding: 1px 15px 0 0;
}
.path label {
  padding-top: 3px;
  text-align: right;
}
.path .raised,
.eph .raised {
  height: 23px;
}
.g-fits {
  min-height: 67px;
  margin-top: 12px;
}
.g-fits .check {
  margin: 0 0 4px 176px;
}
.g-jpl {
  min-height: 72px;
  margin-top: 13px;
}
.eph {
  display: grid;
  grid-template-columns: 12px 9px 260px 19px 16px;
  column-gap: 8px;
  align-items: center;
}
.eph label {
  margin-right: -4px;
  text-align: right;
}
.eph + .eph {
  margin-top: 5px;
}
.eph a {
  padding-left: 5px;
}
.g-jupiter {
  min-height: 55px;
  margin-top: 16px;
}
.g-jupiter .spinrow {
  padding: 1px 0 0 23px;
}
.g-jupiter input {
  width: 48px;
}
.g-jupiter label {
  padding: 5px 0 0 22px;
}
.g-docs {
  min-height: 35px;
  margin-top: 33px;
}
.g-docs p {
  padding-top: 1px;
}
.plot {
  margin: 10px 0 0 2px;
}
.actions {
  display: grid;
  grid-template-columns: 92px 93px 91px 1fr;
  column-gap: 17px;
  align-items: center;
  padding: 8px 22px 1px 212px;
}
.actions .raised {
  height: 28px;
}
.actions a {
  justify-self: end;
}
.status {
  height: 16px;
  flex: none;
  border: 1px solid #fff;
  border-top-color: #aaa;
  border-left-color: #888;
  background: #000;
}
</style>
